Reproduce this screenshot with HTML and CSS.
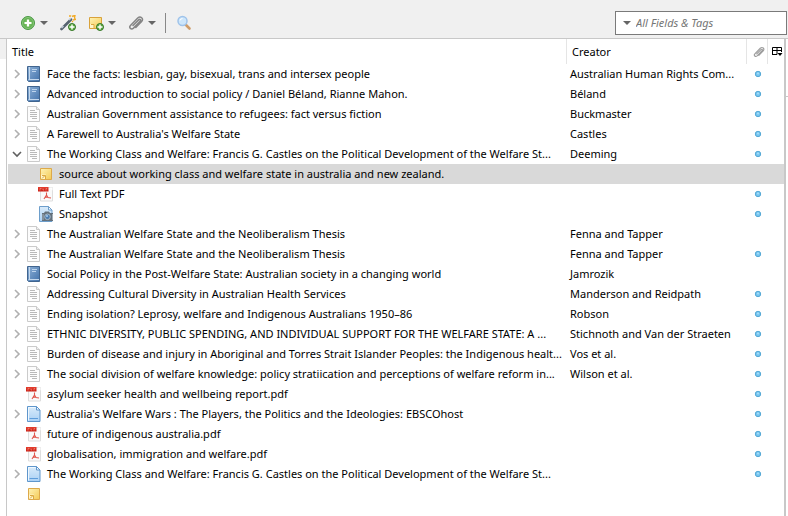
FILE: index.html
```html
<!DOCTYPE html>
<html lang="en">
<head>
<meta charset="utf-8">
<title>Library items</title>
<link rel="stylesheet" href="styles.css">
</head>
<body>
<svg class="sprite" aria-hidden="true">
  <defs>
    <linearGradient id="g-book" x1="0" y1="0" x2="1" y2="1"><stop offset="0" stop-color="#8db1d8"/><stop offset="1" stop-color="#4272aa"/></linearGradient>
    <linearGradient id="g-web" x1="0" y1="0" x2="0" y2="1"><stop offset="0" stop-color="#d9ebfa"/><stop offset="1" stop-color="#a9d0f5"/></linearGradient>
    <linearGradient id="g-note" x1="0" y1="0" x2="1" y2="1"><stop offset="0" stop-color="#fff3b5"/><stop offset="1" stop-color="#f3c955"/></linearGradient>
    <linearGradient id="g-red" x1="0" y1="0" x2="0" y2="1"><stop offset="0" stop-color="#e5402f"/><stop offset="1" stop-color="#c81e14"/></linearGradient>
    <radialGradient id="g-green"><stop offset="0" stop-color="#8fcd70"/><stop offset="1" stop-color="#4fa546"/></radialGradient>
  </defs>
  <symbol id="chevron" viewBox="0 0 10 10"><path d="M3 1l4 4-4 4" fill="none" stroke="#b0b0b0" stroke-width="1.600"/></symbol>
  <symbol id="chevron-open" viewBox="0 0 10 10"><path d="M1 3l4 4 4-4" fill="none" stroke="#606060" stroke-width="1.600"/></symbol>
  <symbol id="book" viewBox="0 0 16 16"><path d="M1.500.5h12v15h-11l-1-1z" fill="url(#g-book)" stroke="#41658f"/><path d="M3.500 1v12.500M2.500 13.500h10.500" stroke="#c4d8ec" fill="none"/><path d="M6 3.500h5M6 5.500h4" stroke="#bdd5ed" fill="none"/></symbol>
  <symbol id="article" viewBox="0 0 16 16"><path d="M1.500.5h9l3 3v12h-12z" fill="#fcfcfc" stroke="#cbcbcb"/><path d="M10.500.5v3h3" fill="#eee" stroke="#cbcbcb"/><path d="M4 4.500h5M4 6.500h7M4 8.500h7M4 10.500h7M6 12.500h5" stroke="#b8b8b8" fill="none"/></symbol>
  <symbol id="webpage" viewBox="0 0 16 16"><path d="M1.500.5h9l3.500 3.500v11.500H1.500z" fill="url(#g-web)" stroke="#5f96cc"/><path d="M10.500.5V4H14z" fill="#f4faff" stroke="#5f96cc"/><path d="M3.500 12.500H12" stroke="#5e9ddb"/><path d="M2.500 1.500h7M2.500 1.500v13" stroke="#eff8ff" fill="none"/></symbol>
  <symbol id="note" viewBox="0 0 16 16"><path d="M2.500 2.500h11v11h-11z" fill="url(#g-note)" stroke="#dda94a"/><path d="M3 8.500h5v4.500H3z" fill="#fff5cc"/><path d="M4 9.500h3.500v3.500M4 12.500l3-3" fill="none" stroke="#dba840"/></symbol>
  <symbol id="pdf" viewBox="0 0 16 16"><path d="M2.500 1.500h12v13.500h-12z" fill="#fafafa" stroke="#dedede"/><path d="M11.500 1.500l3 3v-3z" fill="#fff"/><path d="M0 1h10.500v4.500H0z" fill="url(#g-red)"/><path d="M2 4.500v-2h1.500M5 2.500v1.500h1M8 4.500v-2h1" fill="none" stroke="#f08c80" stroke-width=".7"/><path d="M8.500 6.500v2.500L6 13M8.500 9l1.500 2.500 3 .5M7 11.500l3-.500" fill="none" stroke="#e0584f" stroke-width="1.100"/></symbol>
  <symbol id="snapshot" viewBox="0 0 16 16"><path d="M1.500.5h9l3.500 3.500v11.500H1.500z" fill="url(#g-web)" stroke="#6d9ecb"/><path d="M10.500.5V4H14z" fill="#f4faff" stroke="#6d9ecb"/><path d="M4 7h2l1-1.500h4L12 7h3v8H4z" fill="#64717c"/><path d="M5 8v6M14.500 8v6" stroke="#a4b0ba"/><circle cx="9.500" cy="10.800" r="2.800" fill="#4d7cae" stroke="#a8b8c5"/><circle cx="9" cy="10" r="1" fill="#a5cdf0"/></symbol>
  <symbol id="dot" viewBox="0 0 8 8"><circle cx="4" cy="4" r="2.700" fill="#74c4f0" stroke="#57aad6"/><circle cx="4" cy="3.500" r="1" fill="#a8def9"/></symbol>
  <symbol id="clip" viewBox="0 0 16 16"><path d="M5 10.500l5.600-5.600c1.300-1.200 2.600.1 1.500 1.400l-6.600 6.800c-2.300 2-5-.4-3-2.700L9.700 3c2.900-2.500 6.300.5 3.900 3.500l-5.800 6" fill="none" stroke="#858585" stroke-width="1.500" stroke-linecap="round"/></symbol>
  <symbol id="plus" viewBox="0 0 8 8"><circle cx="4" cy="4" r="3.500" fill="#5ba83f" stroke="#39792b"/><path d="M4 1.500v5M1.500 4h5" stroke="#fff" stroke-width="1.400"/></symbol>
  <symbol id="add" viewBox="0 0 16 16"><circle cx="8" cy="8" r="6.500" fill="url(#g-green)" stroke="#4c9948"/><circle cx="8" cy="8" r="5.500" fill="none" stroke="#9ed28a" stroke-width=".7"/><path d="M8 4.500v7M4.500 8h7" stroke="#fff" stroke-width="2.200"/></symbol>
  <symbol id="wand" viewBox="0 0 16 16"><path d="M1.500 14L11 4.500" stroke="#56636f" stroke-width="2.600" stroke-linecap="round"/><path d="M1.500 13l2-2M9 5l2-2" stroke="#c5cfda" stroke-width="1.500"/><path d="M9 1h2M12 .5l1 1.500M13 1l2-.5-.5 2.500 1 1.500-2.500.5M12 6l1 1" fill="none" stroke="#f2aa25" stroke-width="1.300"/><use href="#plus" x="8" y="8" width="8" height="8"/></symbol>
  <symbol id="new-note" viewBox="0 0 16 16"><path d="M1.500 2.500h12v11h-12z" fill="url(#g-note)" stroke="#d9a23b"/><path d="M2 9h4v4H2z" fill="#fff5cc"/><path d="M3 9.500h3v3.500" fill="none" stroke="#dba840"/><use href="#plus" x="8" y="8" width="8" height="8"/></symbol>
  <symbol id="search" viewBox="0 0 16 16"><path d="M10 10l3.500 3.500" stroke="#cf9c69" stroke-width="2.600" stroke-linecap="round"/><circle cx="6.500" cy="6" r="4.500" fill="#cde6fb" stroke="#9fc3ea" stroke-width="1.500"/><path d="M4 5.500Q4.500 3.500 6.500 3.500" fill="none" stroke="#fff"/></symbol>
  <symbol id="columns" viewBox="0 0 11 10"><path d="M.5 8V.5h9V5M.5 7.500H5M.5 3.500h9M5 .5v7" fill="none" stroke="#000"/><path d="M5.500 6h5L8 9z"/></symbol>
</svg>

<header class="toolbar">
  <button class="tool" aria-label="New item"><svg class="icon"><use href="#add"/></svg><span class="caret"></span></button>
  <button class="tool" aria-label="Add by identifier"><svg class="icon"><use href="#wand"/></svg></button>
  <button class="tool" aria-label="New note"><svg class="icon"><use href="#new-note"/></svg><span class="caret"></span></button>
  <button class="tool" aria-label="Add attachment"><svg class="icon"><use href="#clip"/></svg><span class="caret"></span></button>
  <span class="separator"></span>
  <button class="tool" aria-label="Advanced search"><svg class="icon"><use href="#search"/></svg></button>
  <div class="search"><span class="caret"></span><input type="text" placeholder="All Fields &amp; Tags" aria-label="Search all fields and tags"></div>
</header>

<div class="panes">
<div class="side"></div>
<main class="items">
<table>
  <colgroup><col><col class="col-creator"><col class="col-clip"><col class="col-picker"></colgroup>
  <thead>
    <tr><th>Title</th><th>Creator</th><th aria-label="Attachments"><svg class="clip"><use href="#clip"/></svg></th><th><button class="picker" aria-label="Choose columns"><svg><use href="#columns"/></svg></button></th></tr>
  </thead>
  <tbody>
    <tr><td><div class="item"><svg class="twisty"><use href="#chevron"/></svg><svg class="icon"><use href="#book"/></svg><span>Face the facts: lesbian, gay, bisexual, trans and intersex people</span></div></td><td>Australian Human Rights Com...</td><td><svg class="dot"><use href="#dot"/></svg></td><td></td></tr>
    <tr><td><div class="item"><svg class="twisty"><use href="#chevron"/></svg><svg class="icon"><use href="#book"/></svg><span>Advanced introduction to social policy / Daniel Béland, Rianne Mahon.</span></div></td><td>Béland</td><td><svg class="dot"><use href="#dot"/></svg></td><td></td></tr>
    <tr><td><div class="item"><svg class="twisty"><use href="#chevron"/></svg><svg class="icon"><use href="#article"/></svg><span>Australian Government assistance to refugees: fact versus fiction</span></div></td><td>Buckmaster</td><td><svg class="dot"><use href="#dot"/></svg></td><td></td></tr>
    <tr><td><div class="item"><svg class="twisty"><use href="#chevron"/></svg><svg class="icon"><use href="#article"/></svg><span>A Farewell to Australia's Welfare State</span></div></td><td>Castles</td><td><svg class="dot"><use href="#dot"/></svg></td><td></td></tr>
    <tr><td><div class="item"><svg class="twisty"><use href="#chevron-open"/></svg><svg class="icon"><use href="#article"/></svg><span>The Working Class and Welfare: Francis G. Castles on the Political Development of the Welfare St...</span></div></td><td>Deeming</td><td><svg class="dot"><use href="#dot"/></svg></td><td></td></tr>
    <tr class="selected"><td><div class="item child"><svg class="icon"><use href="#note"/></svg><span>source about working class and welfare state in australia and new zealand.</span></div></td><td></td><td></td><td></td></tr>
    <tr><td><div class="item child"><svg class="icon"><use href="#pdf"/></svg><span>Full Text PDF</span></div></td><td></td><td><svg class="dot"><use href="#dot"/></svg></td><td></td></tr>
    <tr><td><div class="item child"><svg class="icon"><use href="#snapshot"/></svg><span>Snapshot</span></div></td><td></td><td><svg class="dot"><use href="#dot"/></svg></td><td></td></tr>
    <tr><td><div class="item"><svg class="twisty"><use href="#chevron"/></svg><svg class="icon"><use href="#article"/></svg><span>The Australian Welfare State and the Neoliberalism Thesis</span></div></td><td>Fenna and Tapper</td><td></td><td></td></tr>
    <tr><td><div class="item"><svg class="twisty"><use href="#chevron"/></svg><svg class="icon"><use href="#article"/></svg><span>The Australian Welfare State and the Neoliberalism Thesis</span></div></td><td>Fenna and Tapper</td><td><svg class="dot"><use href="#dot"/></svg></td><td></td></tr>
    <tr><td><div class="item"><span class="twisty"></span><svg class="icon"><use href="#book"/></svg><span>Social Policy in the Post-Welfare State: Australian society in a changing world</span></div></td><td>Jamrozik</td><td></td><td></td></tr>
    <tr><td><div class="item"><svg class="twisty"><use href="#chevron"/></svg><svg class="icon"><use href="#article"/></svg><span>Addressing Cultural Diversity in Australian Health Services</span></div></td><td>Manderson and Reidpath</td><td><svg class="dot"><use href="#dot"/></svg></td><td></td></tr>
    <tr><td><div class="item"><svg class="twisty"><use href="#chevron"/></svg><svg class="icon"><use href="#article"/></svg><span>Ending isolation? Leprosy, welfare and Indigenous Australians 1950–86</span></div></td><td>Robson</td><td><svg class="dot"><use href="#dot"/></svg></td><td></td></tr>
    <tr><td><div class="item"><svg class="twisty"><use href="#chevron"/></svg><svg class="icon"><use href="#article"/></svg><span>ETHNIC DIVERSITY, PUBLIC SPENDING, AND INDIVIDUAL SUPPORT FOR THE WELFARE STATE: A ...</span></div></td><td>Stichnoth and Van der Straeten</td><td><svg class="dot"><use href="#dot"/></svg></td><td></td></tr>
    <tr><td><div class="item"><svg class="twisty"><use href="#chevron"/></svg><svg class="icon"><use href="#article"/></svg><span>Burden of disease and injury in Aboriginal and Torres Strait Islander Peoples: the Indigenous healt...</span></div></td><td>Vos et al.</td><td><svg class="dot"><use href="#dot"/></svg></td><td></td></tr>
    <tr><td><div class="item"><svg class="twisty"><use href="#chevron"/></svg><svg class="icon"><use href="#article"/></svg><span>The social division of welfare knowledge: policy stratiication and perceptions of welfare reform in...</span></div></td><td>Wilson et al.</td><td><svg class="dot"><use href="#dot"/></svg></td><td></td></tr>
    <tr><td><div class="item"><span class="twisty"></span><svg class="icon"><use href="#pdf"/></svg><span>asylum seeker health and wellbeing report.pdf</span></div></td><td></td><td><svg class="dot"><use href="#dot"/></svg></td><td></td></tr>
    <tr><td><div class="item"><svg class="twisty"><use href="#chevron"/></svg><svg class="icon"><use href="#webpage"/></svg><span>Australia's Welfare Wars : The Players, the Politics and the Ideologies: EBSCOhost</span></div></td><td></td><td><svg class="dot"><use href="#dot"/></svg></td><td></td></tr>
    <tr><td><div class="item"><span class="twisty"></span><svg class="icon"><use href="#pdf"/></svg><span>future of indigenous australia.pdf</span></div></td><td></td><td><svg class="dot"><use href="#dot"/></svg></td><td></td></tr>
    <tr><td><div class="item"><span class="twisty"></span><svg class="icon"><use href="#pdf"/></svg><span>globalisation, immigration and welfare.pdf</span></div></td><td></td><td><svg class="dot"><use href="#dot"/></svg></td><td></td></tr>
    <tr><td><div class="item"><svg class="twisty"><use href="#chevron"/></svg><svg class="icon"><use href="#webpage"/></svg><span>The Working Class and Welfare: Francis G. Castles on the Political Development of the Welfare St...</span></div></td><td></td><td><svg class="dot"><use href="#dot"/></svg></td><td></td></tr>
    <tr><td><div class="item"><span class="twisty"></span><svg class="icon"><use href="#note"/></svg></div></td><td></td><td></td><td></td></tr>
  </tbody>
</table>
</main>
<div class="details"></div>
</div>
</body>
</html>
```
FILE: styles.css
```css
* { box-sizing: border-box; }
body {
  margin: 0;
  min-height: 100vh;
  display: flex;
  flex-direction: column;
  font: 11px/20px "Noto Sans", "Open Sans", sans-serif;
  color: #000;
  background: #fff;
}
svg { display: block; flex: none; }
.sprite { position: absolute; width: 0; height: 0; }
button { border: 0; padding: 0; background: none; font: inherit; }

.toolbar {
  display: flex;
  align-items: center;
  height: 39px;
  padding: 8px 1px 0 20px;
  background: #f0f0f0;
  border-bottom: 1px solid #c8c8c8;
}
.tool { display: flex; align-items: center; gap: 4px; margin-right: 12px; }
.icon { width: 16px; height: 16px; }
.caret {
  border: 4px solid transparent;
  border-top-color: #666;
  border-bottom-width: 0;
}
.separator { width: 1px; height: 20px; margin: 0 10px 0 -3px; background: #888; }
.search {
  display: flex;
  align-items: center;
  gap: 5px;
  width: 172px;
  height: 24px;
  margin-left: auto;
  padding: 0 7px;
  background: #fff;
  border: 1px solid #7a7a7a;
}
.search input {
  flex: 1;
  min-width: 0;
  padding: 0;
  border: 0;
  outline: 0;
  font: inherit;
  font-style: italic;
}
.search input::placeholder { color: #757575; opacity: 1; }

.panes { display: flex; flex: 1; }
.side { width: 7px; border-right: 1px solid #c8c8c8; background: linear-gradient(#f0f0f0 20px, #fff 20px); }
.items { flex: 1; min-width: 0; padding-left: 1px; }
.details { width: 4px; border-left: 2px solid #c8c8c8; background: linear-gradient(#fff 57px, #c8c8c8 57px, #c8c8c8 58px, #fff 58px); }

table { width: 100%; table-layout: fixed; border-collapse: separate; border-spacing: 0; }
.col-creator { width: 180px; }
.col-clip { width: 21px; }
.col-picker { width: 16px; }
th, td { height: 20px; padding: 0; text-align: left; font-weight: 400; white-space: nowrap; overflow: hidden; }
th { height: 25px; padding-left: 4px; border-right: 1px solid #e5e5e5; }
th:nth-child(2) { padding-left: 5px; }
th:nth-child(3) { padding-left: 6px; }
th:last-child { border-right: 0; }
td:nth-child(2) { padding-left: 3px; }
.clip { width: 12px; height: 12px; opacity: .8; }
.picker { display: block; }
.picker svg { width: 11px; height: 10px; }
.dot { width: 8px; height: 8px; margin-left: 7px; }
.item { display: flex; align-items: center; height: 20px; padding-left: 4px; }
.item .icon { margin-right: 5px; }
.item.child { padding-left: 30px; }
.twisty { width: 10px; height: 10px; margin-right: 4px; }
.selected td { background: #d9d9d9; }
```
